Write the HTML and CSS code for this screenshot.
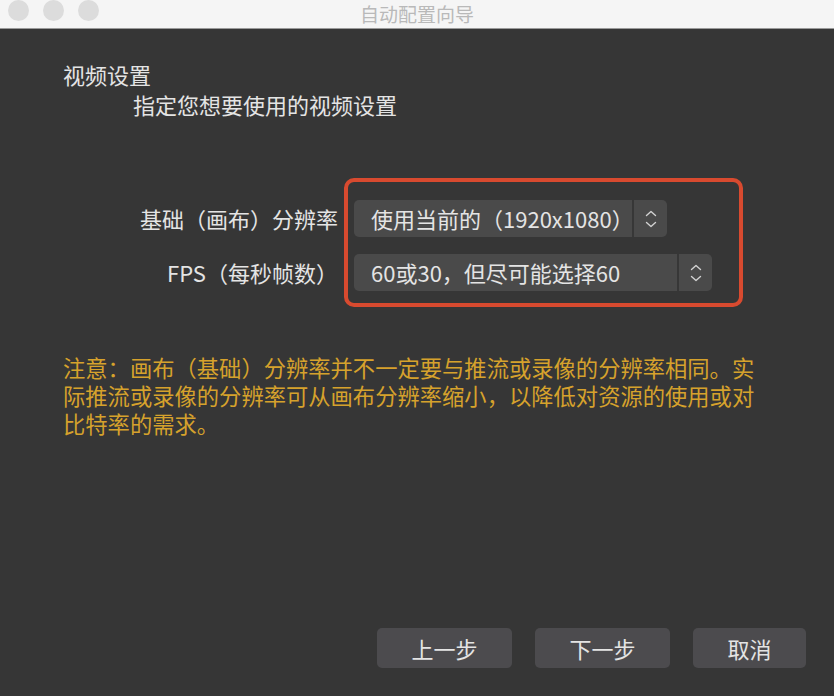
FILE: index.html
```html
<!DOCTYPE html>
<html lang="zh-CN">
<head>
    <meta charset="UTF-8">
    <meta name="viewport" content="width=device-width, initial-scale=1.0">
    <title>自动配置向导</title>
    <link rel="stylesheet" href="styles.css">
</head>
<body>
    <div class="window">
        <div class="titlebar">
            <div class="traffic">
                <span class="light"></span>
                <span class="light"></span>
                <span class="light"></span>
            </div>
            <div class="title">自动配置向导</div>
        </div>

        <div class="content">
            <div class="page-head">
                <div class="page-title">视频设置</div>
                <div class="page-sub">指定您想要使用的视频设置</div>
            </div>

            <div class="form">
                <label class="form-label">基础（画布）分辨率</label>
                <div class="combo combo-res">
                    <span class="combo-text">使用当前的（1920x1080）</span>
                    <span class="combo-arrow">
                        <svg width="12" height="18" viewBox="0 0 12 18"><path d="M1.5 5.5 L6 1.5 L10.5 5.5 M1.5 12.5 L6 16.5 L10.5 12.5" fill="none" stroke="#d2d2d2" stroke-width="1.4" stroke-linecap="round" stroke-linejoin="round"/></svg>
                    </span>
                </div>

                <label class="form-label">FPS（每秒帧数）</label>
                <div class="combo combo-fps">
                    <span class="combo-text">60或30，但尽可能选择60</span>
                    <span class="combo-arrow">
                        <svg width="12" height="18" viewBox="0 0 12 18"><path d="M1.5 5.5 L6 1.5 L10.5 5.5 M1.5 12.5 L6 16.5 L10.5 12.5" fill="none" stroke="#d2d2d2" stroke-width="1.4" stroke-linecap="round" stroke-linejoin="round"/></svg>
                    </span>
                </div>

                <!-- annotation box drawn over the two combos -->
                <div class="highlight"></div>
            </div>

            <p class="note">注意：画布（基础）分辨率并不一定要与推流或录像的分辨率相同。实际推流或录像的分辨率可从画布分辨率缩小，以降低对资源的使用或对比特率的需求。</p>

            <div class="buttons">
                <button class="btn btn-wide">上一步</button>
                <button class="btn btn-wide">下一步</button>
                <button class="btn btn-cancel">取消</button>
            </div>
        </div>
    </div>
</body>
</html>
```

FILE: styles.css
```css
/* Window frame */
body {
    margin: 0;
    background-color: #363636;
    font-family: "Noto Sans CJK SC", "Noto Sans", sans-serif;
}

.window {
    width: 834px;
    height: 696px;
    display: flex;
    flex-direction: column;
    overflow: hidden;
}

/* Title bar */
.titlebar {
    height: 28px;
    flex: none;
    background-color: #f5f5f5;
    border-bottom: 1px solid #9a9a9a;
    position: relative;
    display: flex;
    align-items: center;
    justify-content: center;
}

.traffic {
    position: absolute;
    left: 8px;
    top: 0;
    display: flex;
    gap: 14px;
}

.light {
    width: 21px;
    height: 21px;
    border-radius: 50%;
    background-color: #dcdcdc;
}

.title {
    font-size: 19px;
    line-height: 28px;
    color: #b9b9b9;
}

/* Main content */
.content {
    flex: 1;
    display: flex;
    flex-direction: column;
    padding: 30px 28px 28px 63px;
    color: #e4e4e4;
    font-size: 22px;
}

.page-head {
    line-height: 30px;
}

.page-sub {
    padding-left: 70px;
}

/* Form rows */
.form {
    position: relative;
    margin-top: 81px;
    display: grid;
    grid-template-columns: 275px auto;
    column-gap: 16px;
    row-gap: 17px;
    align-items: center;
    justify-items: start;
}

.form-label {
    justify-self: end;
    line-height: 37px;
}

.combo {
    height: 37px;
    display: flex;
    background-color: #4a4a4a;
    border-radius: 5px;
    line-height: 37px;
}

.combo-text {
    padding-left: 17px;
}

.combo-res .combo-text {
    width: 261px;
}

.combo-fps .combo-text {
    width: 306px;
}

.combo-arrow {
    width: 33px;
    border-left: 2px solid #373737;
    display: flex;
    align-items: center;
    justify-content: center;
}

.highlight {
    position: absolute;
    left: 281px;
    top: -22px;
    width: 391px;
    height: 121px;
    border: 4px solid #d84a2f;
    border-radius: 10px;
}

/* Warning note */
.note {
    margin: 62px 0 0 0;
    width: 700px;
    font-size: 22.3px;
    line-height: 28px;
    color: #d6a22c;
}

/* Bottom buttons */
.buttons {
    margin-top: auto;
    display: flex;
    justify-content: flex-end;
    gap: 23px;
}

.btn {
    height: 40px;
    border: none;
    border-radius: 5px;
    background-color: #4c4b4e;
    color: #e4e4e4;
    font-family: inherit;
    font-size: 22px;
    cursor: pointer;
}

.btn-wide {
    width: 135px;
}

.btn-cancel {
    width: 113px;
}
```
